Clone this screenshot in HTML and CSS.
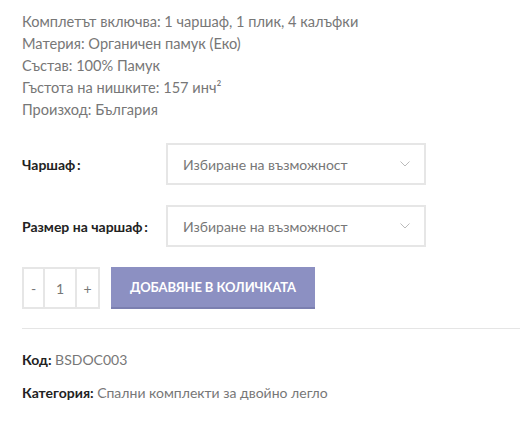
FILE: index.html
```html
<!DOCTYPE html>
<html lang="bg">
<head>
<meta charset="utf-8">
<link rel="stylesheet" href="styles.css">
</head>
<body>
<div class="product">
  <div class="desc">
    <p>Комплетът включва: 1 чаршаф, 1 плик, 4 калъфки</p>
    <p>Материя: Органичен памук (Еко)</p>
    <p>Състав: 100% Памук</p>
    <p>Гъстота на нишките: 157 инч²</p>
    <p>Произход: България</p>
  </div>
  <div class="variations">
    <div class="var-row">
      <label class="var-label">Чаршаф&#8201;:</label>
      <div class="select">
        <span>Избиране на възможност</span>
        <svg class="chev" width="10" height="6" viewBox="0 0 10 6"><path d="M0.5 0.5 L5 5 L9.5 0.5" fill="none" stroke="#bbb" stroke-width="1"/></svg>
      </div>
    </div>
    <div class="var-row">
      <label class="var-label">Размер на чаршаф&#8201;:</label>
      <div class="select">
        <span>Избиране на възможност</span>
        <svg class="chev" width="10" height="6" viewBox="0 0 10 6"><path d="M0.5 0.5 L5 5 L9.5 0.5" fill="none" stroke="#bbb" stroke-width="1"/></svg>
      </div>
    </div>
  </div>
  <div class="cart">
    <div class="qty">
      <span class="qbtn minus">-</span>
      <span class="qval">1</span>
      <span class="qbtn plus">+</span>
    </div>
    <button class="add">ДОБАВЯНЕ В КОЛИЧКАТА</button>
  </div>
  <div class="meta">
    <p><strong>Код:</strong> BSDOC003</p>
    <p><strong>Категория:</strong> Спални комплекти за двойно легло</p>
  </div>
</div>
</body>
</html>
```

FILE: styles.css
```css
* { box-sizing: border-box; }
html, body { margin: 0; padding: 0; background: #fff; }
body {
  font-family: Lato, "Open Sans", sans-serif;
  font-size: 14px;
  color: #777;
}
.product { padding: 11px 0 0 22px; }
.desc p { margin: 0; line-height: 22px; font-size: 14.6px; }
.variations { margin-top: 22px; display: flex; flex-direction: column; gap: 20px; }
.var-row { display: flex; align-items: center; }
.var-label {
  width: 144px;
  font-weight: 700;
  color: #222;
  font-size: 14px;
}
.select {
  width: 260px;
  height: 42px;
  border: 2px solid #e6e6e6;
  display: flex;
  align-items: center;
  justify-content: space-between;
  padding: 0 14px 0 15px;
  color: #777;
  font-size: 14px;
}
.chev { display: block; }
.cart { display: flex; align-items: flex-start; gap: 11px; margin-top: 20px; }
.qty {
  display: flex;
  border: 2px solid #e6e6e6;
  height: 42px;
}
.qbtn, .qval {
  display: flex; align-items: center; justify-content: center;
  height: 38px;
  color: #777;
}
.minus { width: 21px; border-right: 2px solid #e6e6e6; }
.qval { width: 32px; border-right: 2px solid #e6e6e6; font-size: 14px; }
.plus { width: 21px; }
.add {
  width: 204px;
  height: 42px;
  border: 0;
  border-bottom: 2px solid #7b7fb0;
  background: #8c90c2;
  color: #fff;
  font-family: Lato, sans-serif;
  font-weight: 700;
  font-size: 13px;
  letter-spacing: -0.1px;
  padding: 0;
}
.meta {
  margin-top: 19px;
  border-top: 1px solid #e5e5e5;
  padding-top: 20px;
}
.meta p { margin: 0 0 11px; line-height: 22px; }
.meta strong { color: #222; font-weight: 700; }
```
